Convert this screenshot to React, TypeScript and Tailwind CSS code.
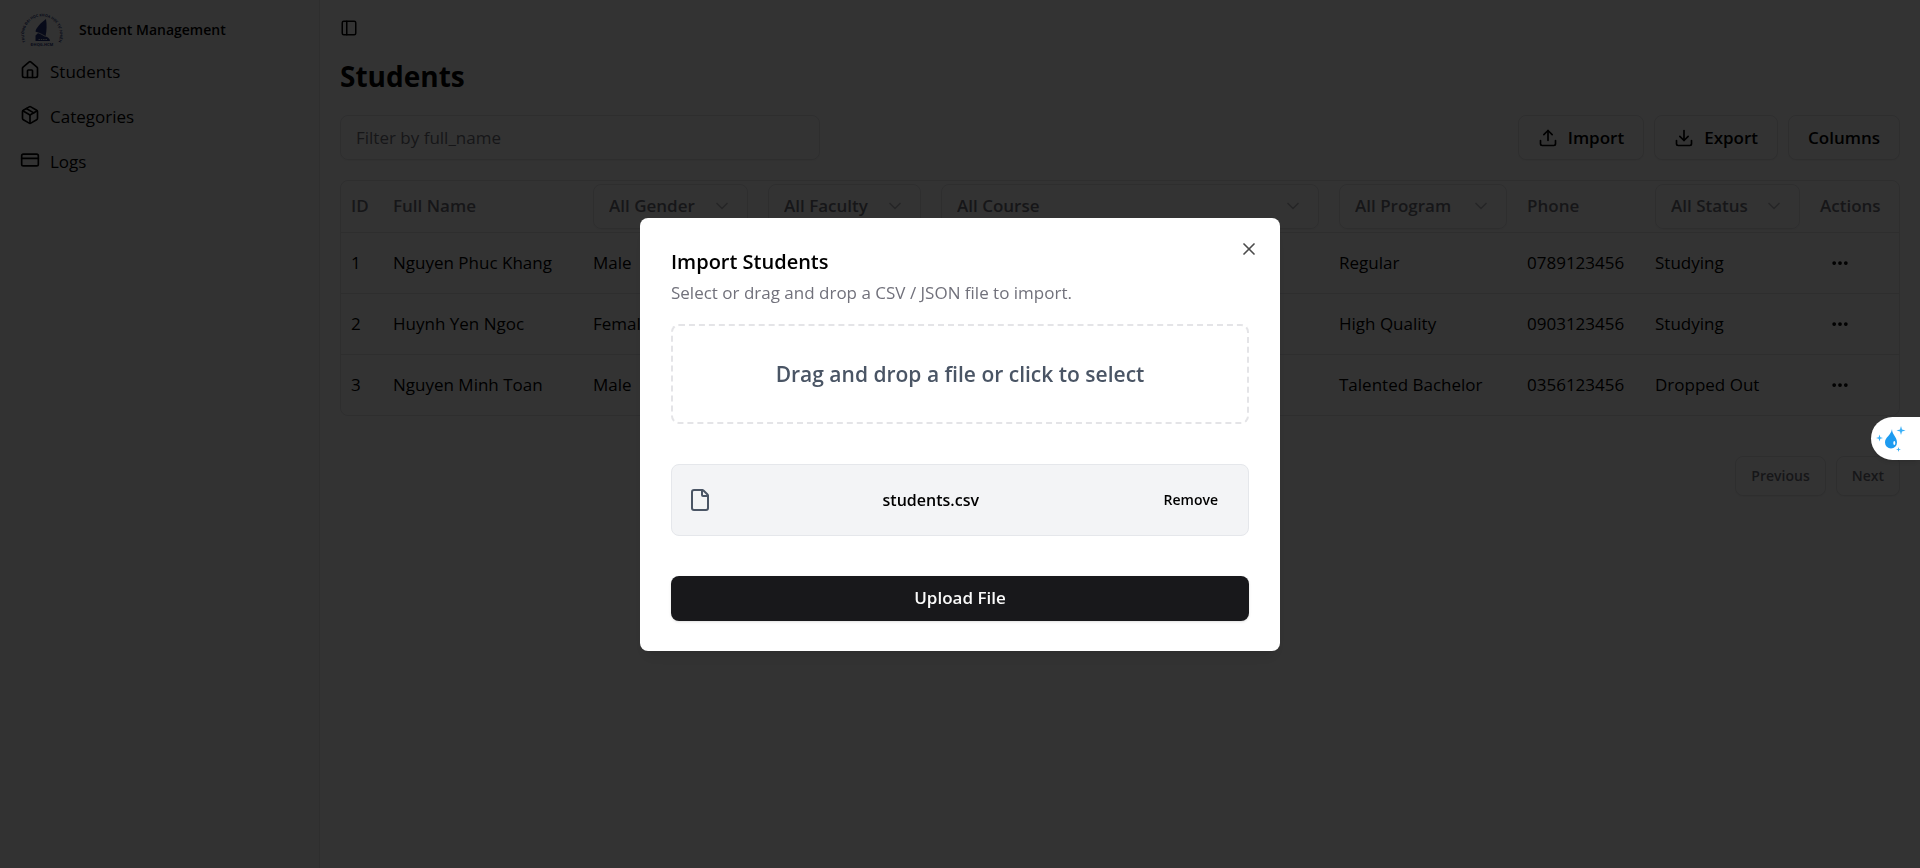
import React, { useState } from 'react';
import { ChevronDown, CreditCard, Download, Ellipsis, File, House, Package, PanelLeft, Upload, X } from 'lucide-react';

const students = [
  { id: 1, name: 'Nguyen Phuc Khang', gender: 'Male', faculty: 'Law', course: 'K2022', program: 'Regular', phone: '0789123456', status: 'Studying' },
  { id: 2, name: 'Huynh Yen Ngoc', gender: 'Female', faculty: 'Law', course: 'K2022', program: 'High Quality', phone: '0903123456', status: 'Studying' },
  { id: 3, name: 'Nguyen Minh Toan', gender: 'Male', faculty: 'Law', course: 'K2022', program: 'Talented Bachelor', phone: '0356123456', status: 'Dropped Out' },
];

const navItems = [
  { label: 'Students', icon: House },
  { label: 'Categories', icon: Package },
  { label: 'Logs', icon: CreditCard },
];

function Logo() {
  return (
    <svg viewBox="0 0 44 40" className="h-10 w-11 shrink-0" fill="#27357c" aria-hidden="true">
      <defs>
        <path id="logo-arc" d="M6.500 35.500 A18 18 0 1 1 37.500 35.500" />
      </defs>
      <text fontSize="3.600" fontWeight="700">
        <textPath href="#logo-arc" startOffset="50%" textAnchor="middle">TRƯỜNG ĐẠI HỌC KHOA HỌC TỰ NHIÊN</textPath>
      </text>
      <path d="M26 11 C21 14.500 16 20 15.500 23.500 L18 25 L15.500 27.500 V33 H30 C30 30.500 27.500 29 25.500 28.500 C26.800 23 27 16.500 26 11 Z" />
      <path d="M16 24.500 C19 24.500 22 26.500 25.500 28.500" stroke="#fafafa" strokeWidth="0.8" fill="none" />
      <path d="M18.500 31.500 H27" stroke="#fafafa" strokeWidth="0.800" strokeDasharray="1.500 0.800" fill="none" />
      <text x="22" y="38" fontSize="4" fontWeight="700" textAnchor="middle">ĐHQG-HCM</text>
    </svg>
  );
}

function HeaderSelect({ label }: { label: string }) {
  return (
    <div className="relative">
      <select
        aria-label={label}
        className="h-[45px] w-full appearance-none rounded-lg border border-zinc-200 bg-transparent pl-[15px] pr-10 font-semibold shadow-xs"
      >
        <option>{label}</option>
      </select>
      <ChevronDown className="pointer-events-none absolute right-4 top-3 size-5 opacity-50" />
    </div>
  );
}

function Sidebar() {
  return (
    <aside className="flex w-80 shrink-0 flex-col border-r border-zinc-200 bg-[#fafafa] px-5">
      <div className="flex h-12 items-end gap-[15px]">
        <Logo />
        <span className="pb-2 text-sm font-semibold leading-5">Student Management</span>
      </div>
      <nav className="flex flex-col">
        {navItems.map(({ label, icon: Icon }) => (
          <a key={label} href={`#${label.toLowerCase()}`} className="flex h-[45px] items-start gap-[10px] pt-3">
            <Icon className="size-5" strokeWidth={2} />
            <span>{label}</span>
          </a>
        ))}
      </nav>
    </aside>
  );
}

const outline = 'flex items-center justify-center rounded-lg border border-zinc-200 bg-white font-semibold shadow-xs';

function StudentsTable() {
  const cell = 'px-[10px] py-0';
  return (
    <div className="overflow-hidden rounded-lg border border-zinc-200">
      <table className="w-full table-fixed border-collapse text-left">
        <colgroup>
          <col className="w-[42px]" />
          <col className="w-[200px]" />
          <col className="w-[175px]" />
          <col className="w-[173px]" />
          <col />
          <col className="w-[188px]" />
          <col className="w-[128px]" />
          <col className="w-[165px]" />
          <col className="w-[89px]" />
        </colgroup>
        <thead className="text-zinc-500">
          <tr className="h-[51px] border-b border-zinc-200 [&>th]:font-semibold">
            <th className={cell}>ID</th>
            <th className={cell}>Full Name</th>
            <th className={cell}><HeaderSelect label="All Gender" /></th>
            <th className={cell}><HeaderSelect label="All Faculty" /></th>
            <th className={cell}><HeaderSelect label="All Course" /></th>
            <th className={cell}><HeaderSelect label="All Program" /></th>
            <th className={cell}>Phone</th>
            <th className={cell}><HeaderSelect label="All Status" /></th>
            <th className={cell}>Actions</th>
          </tr>
        </thead>
        <tbody>
          {students.map((s) => (
            <tr key={s.id} className="h-[61px] border-b border-zinc-200 last:border-b-0">
              <td className={cell}>{s.id}</td>
              <td className={cell}>{s.name}</td>
              <td className={cell}>{s.gender}</td>
              <td className={cell}>{s.faculty}</td>
              <td className={cell}>{s.course}</td>
              <td className={cell}>{s.program}</td>
              <td className={cell}>{s.phone}</td>
              <td className={cell}>{s.status}</td>
              <td className={cell}>
                <button type="button" aria-label={`Actions for ${s.name}`} className="flex size-10 items-center justify-center">
                  <Ellipsis className="size-5" strokeWidth={2.5} />
                </button>
              </td>
            </tr>
          ))}
        </tbody>
      </table>
    </div>
  );
}

function ImportDialog({ onClose }: { onClose: () => void }) {
  const [file, setFile] = useState<string | null>('students.csv');
  return (
    <div className="fixed inset-0 z-10 flex items-center justify-center bg-black/80">
      <div
        role="dialog"
        aria-modal="true"
        aria-labelledby="import-title"
        className="relative flex w-full max-w-[640px] flex-col rounded-lg bg-white px-[31px] py-[30px] shadow-lg"
      >
        <button type="button" aria-label="Close" onClick={onClose} className="absolute right-[21px] top-[21px] opacity-70">
          <X className="size-5" />
        </button>
        <h2 id="import-title" className="text-xl font-semibold leading-7">Import Students</h2>
        <p className="mt-[5px] leading-6 text-zinc-500">Select or drag and drop a CSV / JSON file to import.</p>
        <label className="mt-[19px] flex h-[100px] cursor-pointer items-center justify-center rounded-lg border-2 border-dashed border-zinc-200 text-[21px] font-semibold text-gray-600">
          Drag and drop a file or click to select
          <input type="file" accept=".csv,.json" className="sr-only" />
        </label>
        {file && (
          <div className="mt-10 flex h-[72px] items-center justify-between rounded-lg border border-gray-200 bg-gray-100 px-4">
            <File className="size-6 text-gray-600" />
            <span className="text-base font-semibold">{file}</span>
            <button type="button" onClick={() => setFile(null)} className="px-[14px] text-sm font-semibold">Remove</button>
          </div>
        )}
        <button type="button" className="mt-10 h-[45px] rounded-lg bg-zinc-900 font-semibold text-zinc-50 shadow-sm">
          Upload File
        </button>
      </div>
    </div>
  );
}

function AssistantTab() {
  return (
    <button
      type="button"
      aria-label="Assistant"
      className="fixed right-0 top-[417px] z-20 flex h-[43px] w-[49px] items-center rounded-l-full bg-white pl-[5px] shadow-md"
    >
      <svg viewBox="0 0 30 30" className="size-[30px]" fill="#1d9bf0" aria-hidden="true">
        <path d="M16 5 C16 10.500 21 13 21 18.500 A6 6 0 0 1 9 18.500 C9 13 15 11.500 16 5 Z" />
        <ellipse cx="18.300" cy="19" rx="1" ry="2" fill="#fff" />
        <path fill="#38b0f8" d="M25 2 L26 5.500 L29.500 6.500 L26 7.500 L25 11 L24 7.500 L20.500 6.500 L24 5.500 Z M3.500 10.500 L4.300 13.200 L7 14 L4.300 14.800 L3.500 17.500 L2.700 14.800 L0 14 L2.700 13.200 Z M22.500 23 L23.100 24.900 L25 25.500 L23.100 26.100 L22.500 28 L21.900 26.100 L20 25.500 L21.900 24.900 Z" />
      </svg>
    </button>
  );
}

export default function App() {
  const [open, setOpen] = useState(true);
  return (
    <div className="flex min-h-screen bg-white font-['Open_Sans','Noto_Sans',sans-serif] text-[17px] leading-6 text-black">
      <Sidebar />
      <main className="flex min-w-0 flex-1 flex-col px-5">
        <div className="flex h-14 items-center">
          <button type="button" aria-label="Toggle sidebar">
            <PanelLeft className="size-[18px]" />
          </button>
        </div>
        <h1 className="text-[28px] font-bold leading-10">Students</h1>
        <div className="mt-[19px] flex items-center gap-[10px]">
          <input
            type="text"
            aria-label="Filter by full name"
            placeholder="Filter by full_name"
            className="mr-auto h-[45px] w-[480px] rounded-lg border border-zinc-200 px-[15px] shadow-xs placeholder:text-zinc-500"
          />
          <button type="button" onClick={() => setOpen(true)} className={`${outline} h-[45px] gap-[10px] px-[19px]`}>
            <Upload className="size-5" />
            Import
          </button>
          <button type="button" className={`${outline} h-[45px] gap-[10px] px-[19px]`}>
            <Download className="size-5" />
            Export
          </button>
          <button type="button" className={`${outline} h-[45px] px-[19px]`}>Columns</button>
        </div>
        <div className="mt-5">
          <StudentsTable />
        </div>
        <div className="mt-10 flex justify-end gap-[10px]">
          <button type="button" disabled className={`${outline} h-10 px-[15px] text-sm text-zinc-500`}>Previous</button>
          <button type="button" disabled className={`${outline} h-10 px-[15px] text-sm text-zinc-500`}>Next</button>
        </div>
      </main>
      {open && <ImportDialog onClose={() => setOpen(false)} />}
      <AssistantTab />
    </div>
  );
}
